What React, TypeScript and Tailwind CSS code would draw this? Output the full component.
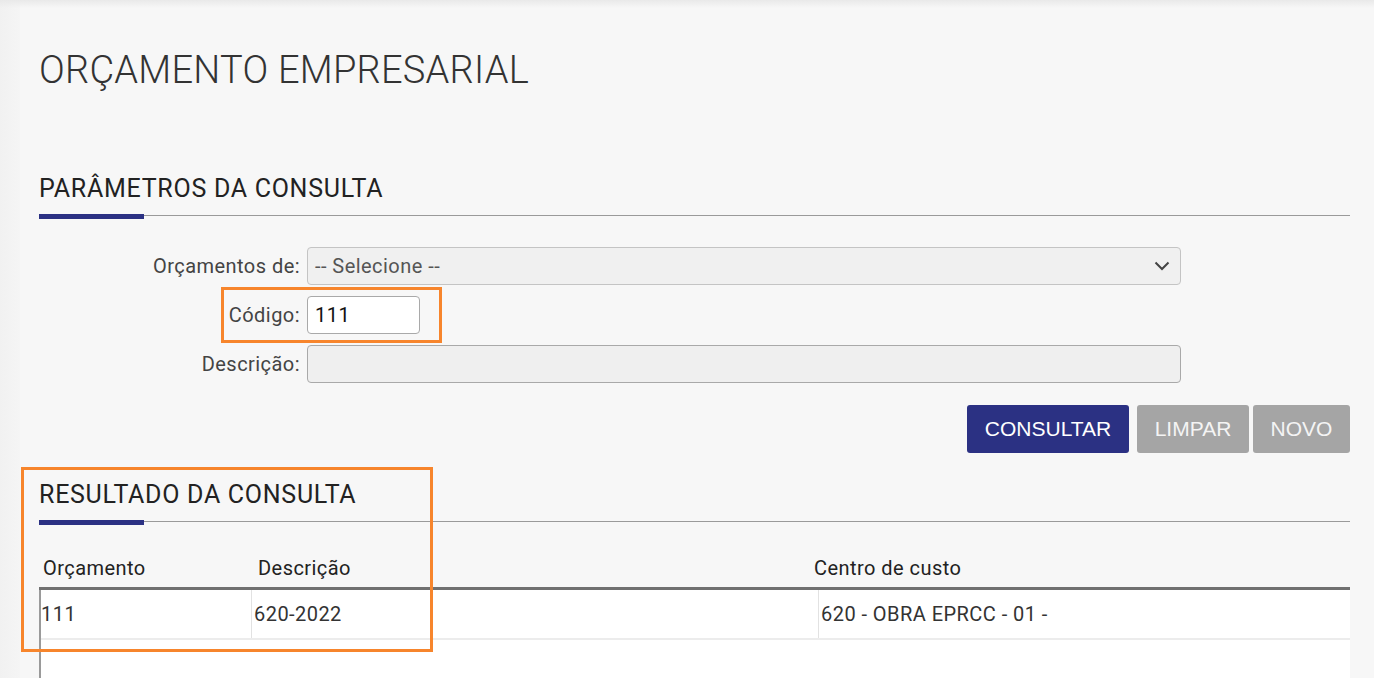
import React from 'react'

// ── Section heading with underline ───────────────────────────────────────────

function SectionTitle({ children }: { children: React.ReactNode }) {
  return (
    <div>
      <h2 className="text-[25px] leading-none text-[#222] tracking-[0.72px]">{children}</h2>
      <div className="mt-[13px] flex items-start h-[5px]">
        <div className="w-[105px] h-[5px] bg-[#2b3183] shrink-0" />
        <div className="flex-1 h-px mt-[1px] bg-[#9a9a9a]" />
      </div>
    </div>
  )
}

// ── Form row ─────────────────────────────────────────────────────────────────

function Label({ children }: { children: React.ReactNode }) {
  return (
    <div className="h-[38px] flex items-center justify-end text-[20px] text-[#444]">
      {children}
    </div>
  )
}

function Chevron() {
  return (
    <svg width="16" height="10" viewBox="0 0 16 10" className="shrink-0">
      <polyline points="1.5,1.5 8,8 14.5,1.5" fill="none" stroke="#444" strokeWidth="2" />
    </svg>
  )
}

// ── Main ─────────────────────────────────────────────────────────────────────

export default function App() {
  return (
    <div className="relative h-[678px] overflow-hidden bg-[#f7f7f7] font-['Roboto',sans-serif] tracking-[0.45px] flex">
      {/* top shadow */}
      <div className="absolute inset-x-0 top-0 h-[8px] bg-gradient-to-b from-[#e9e9e9] to-transparent" />
      {/* left gutter */}
      <div className="w-[20px] shrink-0 bg-gradient-to-r from-[#f1f1f1] to-[#f5f5f5]" />

      <div className="flex-1 pl-[19px] pr-[24px]">
        {/* Page title */}
        <h1 className="mt-[51px] text-[38px] leading-none font-light text-[#333] tracking-[0.25px]">
          ORÇAMENTO EMPRESARIAL
        </h1>

        {/* Parâmetros */}
        <div className="mt-[87px]">
          <SectionTitle>PARÂMETROS DA CONSULTA</SectionTitle>
        </div>

        <div className="relative mt-[28px] grid grid-cols-[261px_874px] gap-x-[7px] gap-y-[11px]">
          <Label>Orçamentos de:</Label>
          <div className="h-[38px] flex items-center justify-between rounded-[4px] border border-[#c4c4c4] bg-[#f0f0f0] pl-[7px] pr-[10px] text-[20px] text-[#555]">
            <span>-- Selecione --</span>
            <Chevron />
          </div>

          <Label>Código:</Label>
          <div className="h-[38px] w-[113px] flex items-center rounded-[4px] border border-[#a9a9a9] bg-white pl-[7px] text-[20px] text-[#111]">
            111
          </div>

          <Label>Descrição:</Label>
          <div className="h-[38px] rounded-[4px] border border-[#a9a9a9] bg-[#efefef]" />

          {/* highlight */}
          <div className="absolute left-[182px] top-[40px] w-[221px] h-[56px] border-[3px] border-[#f7852c]" />
        </div>

        {/* Buttons */}
        <div className="mt-[22px] flex justify-end font-['Liberation_Sans',Arial,sans-serif] text-[21px] tracking-normal">
          <button className="h-[48px] w-[162px] rounded-[3px] bg-[#2b3183] text-white">CONSULTAR</button>
          <button className="ml-[8px] h-[48px] w-[112px] rounded-[3px] bg-[#a5a5a5] text-[#f4f4f4]">LIMPAR</button>
          <button className="ml-[4px] h-[48px] w-[97px] rounded-[3px] bg-[#a5a5a5] text-[#f4f4f4]">NOVO</button>
        </div>

        {/* Resultado */}
        <div className="relative mt-[29px]">
          <SectionTitle>RESULTADO DA CONSULTA</SectionTitle>

          {/* table header */}
          <div className="mt-[31px] grid grid-cols-[215px_556px_1fr] pl-[4px] pb-[7px] border-b-[3px] border-[#707070] text-[20px] leading-[24px] text-[#222]">
            <span>Orçamento</span>
            <span>Descrição</span>
            <span>Centro de custo</span>
          </div>

          {/* table body */}
          <div className="border-l-2 border-[#9a9a9a] bg-white h-[120px]">
            <div className="grid grid-cols-[210px_567px_1fr] h-[50px] border-b-2 border-[#ececec] text-[20px] text-[#333]">
              <div className="flex items-center">111</div>
              <div className="flex items-center pl-[2px] border-l border-[#e2e2e2]">620-2022</div>
              <div className="flex items-center pl-[2px] border-l border-[#e2e2e2]">620 - OBRA EPRCC - 01 -</div>
            </div>
          </div>

          {/* highlight */}
          <div className="absolute left-[-18px] top-[-15px] w-[412px] h-[185px] border-[3px] border-[#f7852c]" />
        </div>
      </div>
    </div>
  )
}
